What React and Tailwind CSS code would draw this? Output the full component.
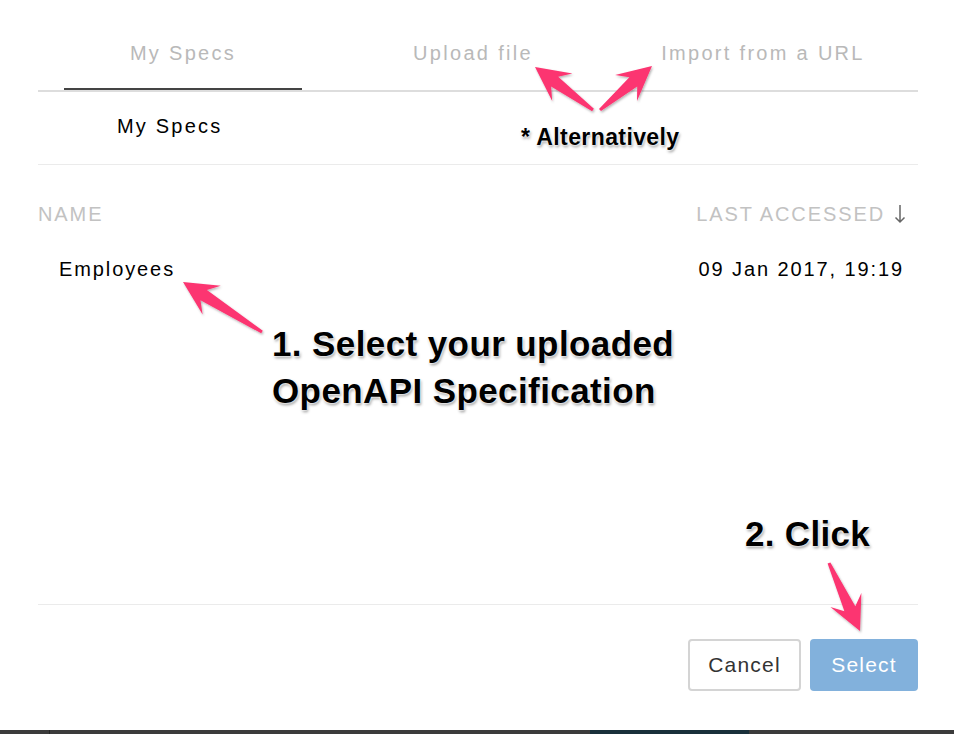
import React from 'react';

const PINK = '#fc3571';

// skitch style arrow, tail -> tip
const arrowPoints = (x1, y1, x2, y2, head = 34, hw = 17, neckW = 6, tailW = 1.5) => {
  const dx = x2 - x1;
  const dy = y2 - y1;
  const len = Math.hypot(dx, dy);
  const ux = dx / len;
  const uy = dy / len;
  const nx = -uy;
  const ny = ux;
  const nk = [x2 - ux * head * 0.72, y2 - uy * head * 0.72];
  const wg = [x2 - ux * head, y2 - uy * head];
  const pts = [
    [x1 + nx * tailW, y1 + ny * tailW],
    [nk[0] + nx * neckW, nk[1] + ny * neckW],
    [wg[0] + nx * hw, wg[1] + ny * hw],
    [x2, y2],
    [wg[0] - nx * hw, wg[1] - ny * hw],
    [nk[0] - nx * neckW, nk[1] - ny * neckW],
    [x1 - nx * tailW, y1 - ny * tailW],
  ];
  return pts.map((p) => p.map((v) => v.toFixed(1)).join(',')).join(' ');
};

const arrows = [
  [262, 332, 183, 282],
  [593, 110, 535, 67],
  [600, 110, 652, 66],
  [829, 563, 860, 631],
];

const Arrows = () => (
  <svg className="absolute inset-0 pointer-events-none" width="954" height="734">
    <defs>
      <filter id="sh" x="-20%" y="-20%" width="140%" height="140%">
        <feDropShadow dx="1" dy="1.5" stdDeviation="1.2" floodColor="#000" floodOpacity="0.3" />
      </filter>
    </defs>
    {arrows.map((a, i) => (
      <polygon key={i} points={arrowPoints(...a)} fill={PINK} filter="url(#sh)" strokeLinejoin="round" />
    ))}
  </svg>
);

const SortDown = () => (
  <svg width="12" height="20" viewBox="0 0 12 20" className="ml-[9px]">
    <path d="M6 1v17M1.5 13.5L6 18l4.5-4.5" fill="none" stroke="#666666" strokeWidth="1.5" />
  </svg>
);

const note =
  "absolute font-bold text-black font-['Liberation_Sans',Arial,sans-serif] [text-shadow:0_0_2px_#fff,0_0_2px_#fff,0_0_3px_#fff,1px_2px_3px_rgba(0,0,0,0.45)]";

const App = () => {
  const tabs = ['My Specs', 'Upload file', 'Import from a URL'];

  return (
    <div className="relative w-[954px] h-[734px] bg-white overflow-hidden flex flex-col font-['Liberation_Sans',Arial,sans-serif] text-[20px] tracking-[1.9px]">
      <div className="pl-[38px] pr-[36px] w-full flex flex-col flex-1">
        {/* tabs */}
        <div className="flex border-b-2 border-[#dddddd]">
          {tabs.map((t, i) => (
            <div key={t} className="w-[290px] h-[90px] flex flex-col items-center">
              <div className="pt-[41px] leading-[24px] text-[20px] text-[#b9b9b9] tracking-[2.3px]">{t}</div>
              {i === 0 && <div className="mt-auto w-[238px] h-[2px] bg-[#444444]" />}
            </div>
          ))}
        </div>

        <div className="h-[73px] pb-[4px] flex items-center pl-[79px] border-b border-[#ebebeb] text-black tracking-[2.2px]">
          My Specs
        </div>

        <div className="pt-[37px] flex justify-between items-center leading-[24px] text-[#c2c2c2] pr-[12px]">
          <span>NAME</span>
          <span className="flex items-center">
            LAST ACCESSED
            <SortDown />
          </span>
        </div>

        <div className="mt-[31px] flex justify-between leading-[24px] text-black pl-[21px] pr-[14px]">
          <span>Employees</span>
          <span>09 Jan 2017, 19:19</span>
        </div>

        <div className="flex-1" />

        <div className="border-t border-[#ebebeb] pt-[34px] pb-[39px] flex justify-end gap-[9px] tracking-[1.2px] text-[21px]">
          <button className="w-[113px] h-[52px] rounded-[4px] border-2 border-[#d4d4d4] bg-white text-[#333333]">
            Cancel
          </button>
          <button className="w-[108px] h-[52px] rounded-[4px] bg-[#82b1dc] text-white">Select</button>
        </div>
      </div>

      {/* taskbar strip */}
      <div className="h-[4px] flex bg-[#3b3b3b]">
        <div className="w-[50px] border-r border-[#262626]" />
        <div className="w-[540px]" />
        <div className="w-[159px] bg-[#19303a]" />
      </div>

      <Arrows />

      <div className={`${note} left-[521px] top-[122px] text-[23px] leading-[30px] tracking-[0.4px]`}>* Alternatively</div>
      <div className={`${note} left-[272px] top-[320px] text-[35px] leading-[47px] tracking-[0.4px]`}>
        1. Select your uploaded
        <br />
        OpenAPI Specification
      </div>
      <div className={`${note} left-[745px] top-[512px] text-[35px] leading-[44px] tracking-[0.3px]`}>2. Click</div>
    </div>
  );
};

export default App;
